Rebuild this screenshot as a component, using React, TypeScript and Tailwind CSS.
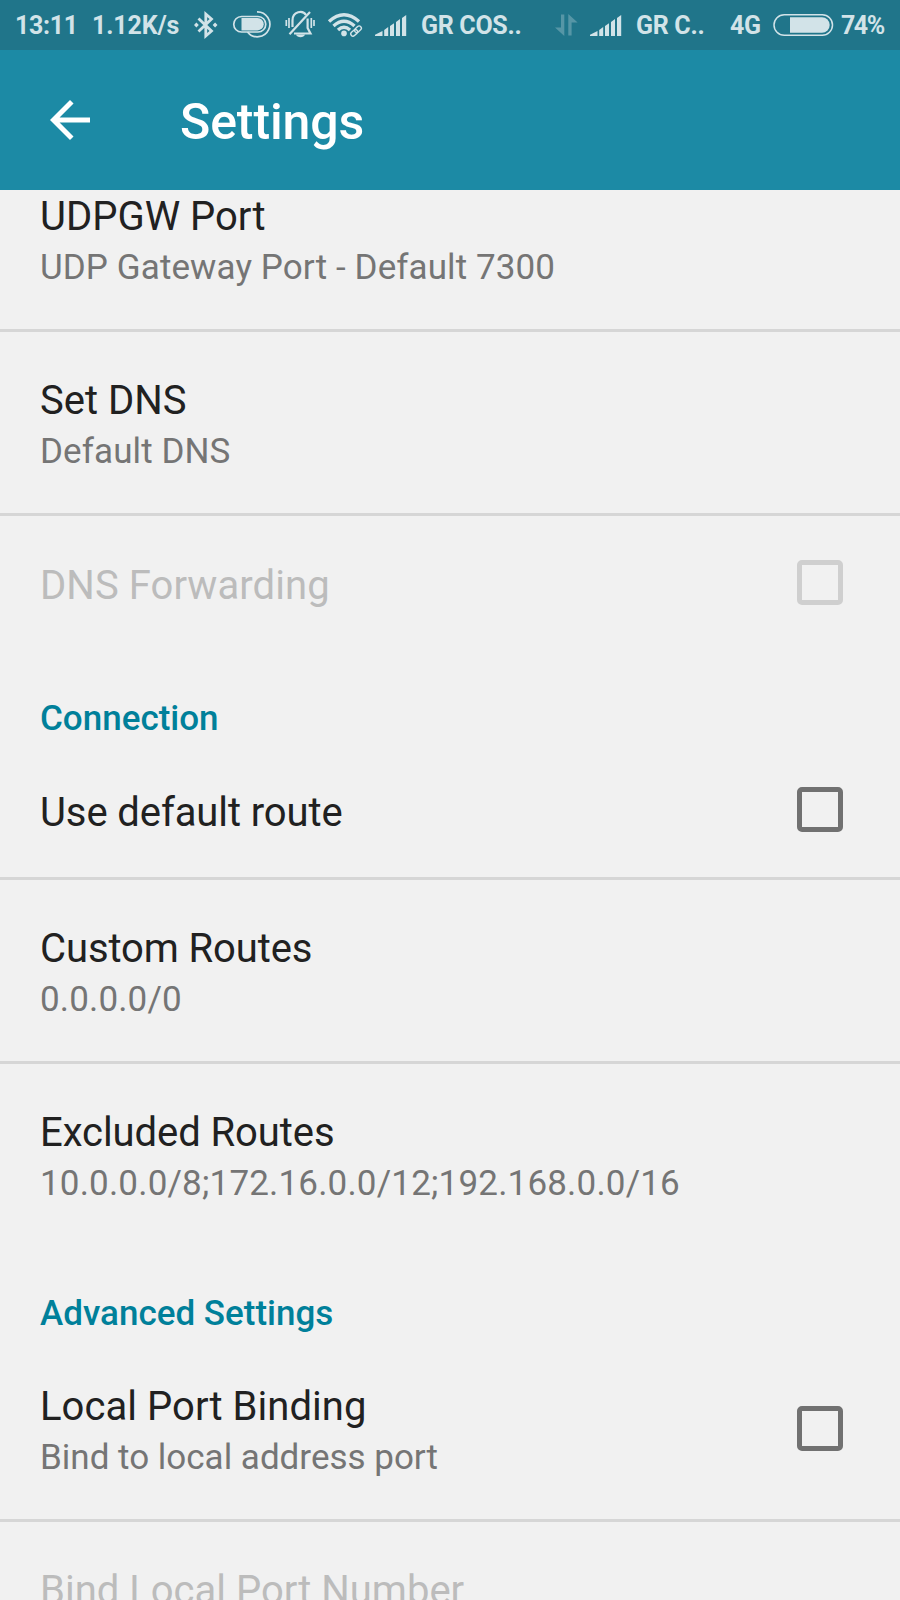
import type { ReactNode } from "react";

function Bluetooth() {
  return (
    <svg className="h-[50px] w-6 shrink-0" viewBox="194 0 24 50" fill="none" stroke="currentColor" strokeWidth="2.8">
      <path d="M198.500 18.500 L211.500 31 L205.800 36 V14 L211.500 19 L198.500 31.500" />
      <path d="M194 25 L196.400 22.600 L198.800 25 L196.400 27.400Z M212.700 25 L215.100 22.600 L217.500 25 L215.100 27.400Z" fill="currentColor" stroke="none" />
    </svg>
  );
}

function PowerSaver() {
  return (
    <svg className="h-[50px] w-10 shrink-0" viewBox="232 0 40 50" fill="none" stroke="currentColor" strokeWidth="1.7">
      <path d="M258 16.500 H241.500 a7.750 7.750 0 0 0 0 15.500 H258 a7.750 7.750 0 0 0 0 -15.500Z" />
      <path d="M241.500 18 H257.500 a6.200 6.200 0 0 1 0 12.400 H241.500Z" fill="currentColor" stroke="none" />
      <path d="M257 11.800 A12.500 12.500 0 1 1 247.500 32" />
    </svg>
  );
}

function MutedBell() {
  return (
    <svg className="h-[50px] w-[30px] shrink-0" viewBox="285 0 30 50" fill="none" stroke="currentColor" strokeWidth="2.2">
      <path d="M292.500 27 V20.500 C292.500 11 303 10 306 15" />
      <path d="M307.600 18.500 V28 L310.500 33.500 H294" />
      <path d="M310 12 L289.500 34.300" />
      <path d="M289 18 V28 M286.300 20 V26 M311.300 18 V28 M314 20 V26" strokeWidth="1.700" />
      <path d="M296 34.500 H305 C304 38.200 297 38.200 296 34.500Z" fill="currentColor" stroke="none" />
    </svg>
  );
}

function Wifi() {
  return (
    <svg className="h-[50px] w-9 shrink-0" viewBox="327 0 36 50" fill="none" stroke="currentColor" strokeWidth="3.4">
      <path d="M329 21.500 Q344 8 359 21.500" />
      <path d="M333.500 25.900 Q344 16.500 354.500 25.900" />
      <path d="M338 30 Q344 24.600 350 30" />
      <circle cx="344" cy="33.400" r="2.800" fill="currentColor" stroke="none" />
      <g strokeWidth="1.400" transform="rotate(-43 356 31)">
        <rect x="349.600" y="28.900" width="7.600" height="4.400" rx="2.200" />
        <rect x="354.800" y="28.900" width="7.600" height="4.400" rx="2.200" />
      </g>
    </svg>
  );
}

function Signal({ className }: { className: string }) {
  return (
    <svg className={className} viewBox="0 0 32 50" fill="currentColor">
      <path d="M0 36 V34.800 L7.500 31 V36Z M9.200 30 L13.200 27 V36 H9.200Z M15 26 L19 23.200 V36 H15Z M21 22 L25 19 V36 H21Z M27 18 L31.200 15 V36 H27Z" />
    </svg>
  );
}

function Transfer() {
  return (
    <svg className="ml-[34px] h-[50px] w-6 shrink-0 opacity-30" viewBox="554 0 24 50" fill="currentColor">
      <path d="M561 14.500 H564.300 V36 L555 27.500 H561Z M568.300 35.500 V14 L577.600 22.500 H571.600 V35.500Z" />
    </svg>
  );
}

function Battery() {
  return (
    <svg className="h-[50px] w-[61px] shrink-0" viewBox="773 0 61 50">
      <rect x="774" y="14.800" width="58.500" height="20.500" rx="10.250" fill="none" stroke="currentColor" strokeWidth="1.500" />
      <path d="M790 17.300 H822 A7.700 7.700 0 0 1 822 32.700 H790Z" fill="currentColor" />
    </svg>
  );
}

function StatusText({ className, children }: { className: string; children: ReactNode }) {
  return <span className={`shrink-0 whitespace-nowrap pt-px font-bold ${className}`}>{children}</span>;
}

function StatusBar() {
  return (
    <div className="flex h-[50px] shrink-0 items-center bg-[#20758a] text-[25px] leading-[50px] tracking-[-0.3px] text-[#d2e3e8]">
      <StatusText className="ml-[15px] w-[77px]">13:11</StatusText>
      <StatusText className="w-[102px] tracking-[-0.15px]">1.12K/s</StatusText>
      <div className="flex w-[227px] shrink-0 items-center">
        <Bluetooth />
        <span className="w-[14px]" />
        <PowerSaver />
        <span className="w-[13px]" />
        <MutedBell />
        <span className="w-[12px]" />
        <Wifi />
        <span className="w-[12px]" />
        <Signal className="h-[50px] w-8 shrink-0" />
      </div>
      <StatusText className="w-[99px]">GR COS..</StatusText>
      <Transfer />
      <Signal className="ml-[12px] h-[50px] w-8 shrink-0" />
      <StatusText className="ml-[14px] w-[94px]">GR C..</StatusText>
      <StatusText className="w-[43px]">4G</StatusText>
      <Battery />
      <StatusText className="ml-[7px] tracking-[-1.5px]">74%</StatusText>
    </div>
  );
}

function Toolbar() {
  return (
    <header className="flex h-[140px] shrink-0 items-center bg-[#1c8aa5] pl-[50px] text-white">
      <svg className="h-10 w-10 shrink-0" viewBox="4 4 16 16" fill="currentColor">
        <path d="M20 11H7.830l5.590-5.590L12 4l-8 8 8 8 1.410-1.410L7.830 13H20v-2z" />
      </svg>
      <h1 className="ml-[90px] pt-[3px] text-[50px] font-medium leading-[60px] tracking-[-0.1px]">Settings</h1>
    </header>
  );
}

function Preference({
  title,
  titleClass = "",
  summary,
  summaryClass = "",
  checkbox,
  disabled,
  divider,
}: {
  title: string;
  titleClass?: string;
  summary?: string;
  summaryClass?: string;
  checkbox?: boolean;
  disabled?: boolean;
  divider?: boolean;
}) {
  return (
    <div
      className={`flex shrink-0 items-center justify-between border-b-[3px] pl-10 pr-[57px] ${summary ? "h-[184px]" : "h-[137px]"} ${
        divider ? "border-[#d6d6d6]" : "border-transparent"
      }`}
    >
      <div className={summary ? "pt-[9px]" : "pt-[5px]"}>
        <div className={`text-[40px] leading-[48px] ${disabled ? "text-[#bcbcbc]" : "text-[#212121]"} ${titleClass}`}>{title}</div>
        {summary && <div className={`text-[35px] leading-[53px] text-[#757575] ${summaryClass}`}>{summary}</div>}
      </div>
      {checkbox && (
        <span className={`mb-px h-[45px] w-[46px] shrink-0 rounded-[5px] border-[5px] ${disabled ? "border-[#cfcfcf]" : "border-[#717171]"}`} />
      )}
    </div>
  );
}

function Category({ children }: { children: ReactNode }) {
  return <h2 className="h-[90px] shrink-0 pl-10 pt-[42px] text-[35px] font-medium leading-[48px] text-[#00809a]">{children}</h2>;
}

export default function App() {
  return (
    <div className="flex h-[1600px] w-[900px] flex-col overflow-hidden bg-[#f1f1f1] font-['Roboto',sans-serif]">
      <StatusBar />
      <Toolbar />
      <main className="flex min-h-0 flex-1 flex-col overflow-hidden">
        <div className="-mt-[42px] flex flex-col">
          <Preference title="UDPGW Port" summary="UDP Gateway Port - Default 7300" summaryClass="tracking-[0.1px]" divider />
          <Preference title="Set DNS" summary="Default DNS" summaryClass="tracking-[0.1px]" divider />
          <Preference title="DNS Forwarding" titleClass="tracking-[0.07px]" checkbox disabled />
          <Category>Connection</Category>
          <Preference title="Use default route" titleClass="tracking-[-0.1px]" checkbox divider />
          <Preference title="Custom Routes" titleClass="tracking-[-0.1px]" summary="0.0.0.0/0" summaryClass="tracking-[0.15px]" divider />
          <Preference
            title="Excluded Routes"
            titleClass="tracking-[-0.07px]"
            summary="10.0.0.0/8;172.16.0.0/12;192.168.0.0/16"
            summaryClass="tracking-[0.18px]"
          />
          <Category>Advanced Settings</Category>
          <Preference title="Local Port Binding" titleClass="tracking-[0.05px]" summary="Bind to local address port" checkbox divider />
          <Preference title="Bind Local Port Number" summary={"\u00a0"} disabled />
        </div>
      </main>
    </div>
  );
}
